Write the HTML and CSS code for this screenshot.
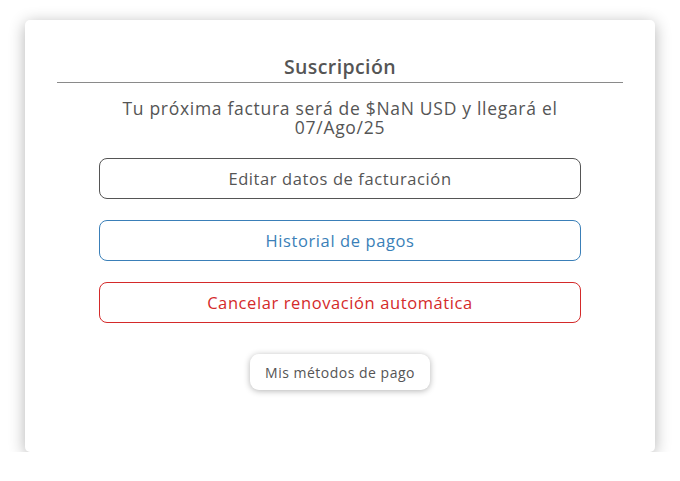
FILE: index.html
```html
<!DOCTYPE html>
<html lang="es">
<head>
<meta charset="utf-8">
<link rel="stylesheet" href="styles.css">
</head>
<body>
<div class="card">
  <h2 class="title">Suscripción</h2>
  <hr class="divider">
  <p class="info">Tu próxima factura será de $NaN USD y llegará el<br>07/Ago/25</p>
  <div class="actions">
    <button class="btn btn-dark">Editar datos de facturación</button>
    <button class="btn btn-blue">Historial de pagos</button>
    <button class="btn btn-red">Cancelar renovación automática</button>
  </div>
  <button class="pill">Mis métodos de pago</button>
</div>
</body>
</html>
```
FILE: styles.css
```css
html, body {
  margin: 0;
  padding: 0;
  background: #ffffff;
  font-family: "Open Sans", "Liberation Sans", sans-serif;
}
body {
  padding: 20px 25px 0 25px;
}
.card {
  width: 630px;
  height: 432px;
  box-sizing: border-box;
  background: #fff;
  border-radius: 5px;
  box-shadow: 0 3px 16px rgba(0,0,0,0.3);
  padding: 33px 32px 0 32px;
  display: flex;
  flex-direction: column;
  align-items: center;
}
.title {
  margin: 0;
  font-size: 19.5px;
  font-weight: 600;
  letter-spacing: 0.4px;
  color: #555;
  line-height: 27px;
}
.divider {
  width: 100%;
  margin: 2px 0 0 0;
  border: 0;
  border-top: 1px solid #8a8a8a;
}
.info {
  margin: 16px 0 0 0;
  text-align: center;
  font-size: 17.5px;
  letter-spacing: 0.7px;
  line-height: 19px;
  color: #555;
}
.actions {
  width: 482px;
  margin-top: 21px;
  display: flex;
  flex-direction: column;
  gap: 21px;
}
.btn {
  height: 41px;
  border-radius: 8px;
  background: #fff;
  font-family: inherit;
  font-size: 16.5px;
  letter-spacing: 0.6px;
  border: 1px solid;
}
.btn-dark { border-color: #555; color: #555; }
.btn-blue { border-color: #3a7fb8; color: #3a7fb8; }
.btn-red { border-color: #d42a2a; color: #d42a2a; }
.pill {
  margin-top: 31px;
  width: 180px;
  height: 36px;
  border: 0;
  border-radius: 9px;
  background: #fff;
  box-shadow: 0 1px 6px rgba(0,0,0,0.3);
  font-family: inherit;
  font-size: 14px;
  letter-spacing: 0.5px;
  color: #555;
}
```
